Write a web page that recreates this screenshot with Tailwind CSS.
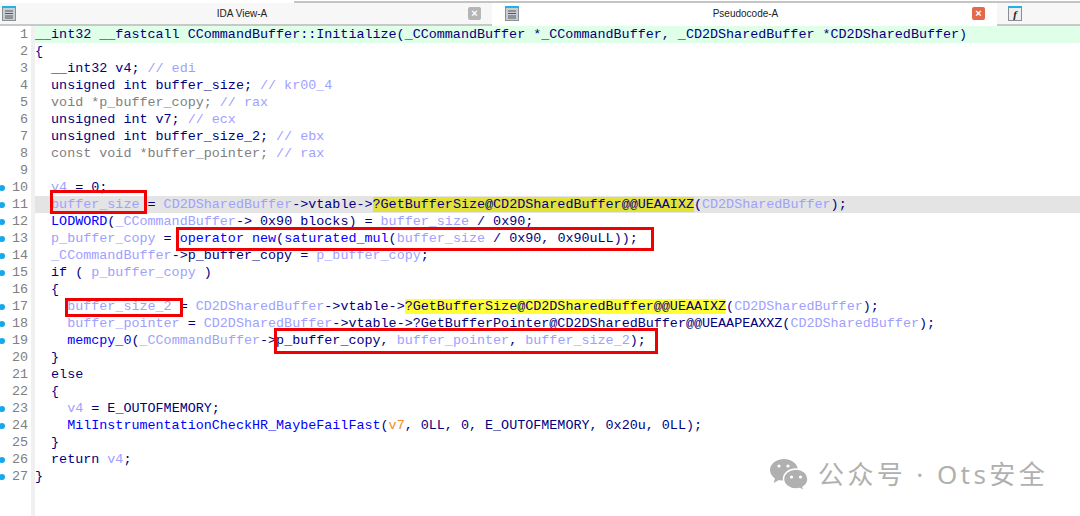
<!DOCTYPE html>
<html lang="zh">
<head>
  <meta charset="UTF-8" />
  <title>Pseudocode-A</title>
  <script src="https://cdn.jsdelivr.net/npm/@tailwindcss/browser@4"></script>
</head>
<body class="bg-white overflow-hidden">
<div class="relative w-[1080px] h-[516px] overflow-hidden bg-white flex flex-col">

  <!-- tabs -->
  <div class="h-[3px] pt-[1px] pl-[294px]"><div class="h-[2px] bg-[#c4c4c4]"></div></div>
  <header class="h-[23px] flex font-['Liberation_Sans',sans-serif] text-[10px] text-[#222]">
    <div class="w-[492px] flex items-center bg-[#f7f7f7] border-b-2 border-[#c8c8c8] pl-[2px] pr-[11px]">
      <svg width="14" height="15" viewBox="0 0 14 15"><rect x=".5" y=".5" width="13" height="14" fill="#c9ced2" stroke="#8a8f93"/><rect x="0" y="0" width="14" height="2" fill="#1fb2e6"/><path d="M3 5h8M3 7.500h8M3 10h8M3 12h8" stroke="#55595c"/></svg>
      <span class="flex-1 text-center">IDA View-A</span>
      <span class="w-[13px] h-[13px] rounded-[2px] bg-[#b5b5b5] text-white flex items-center justify-center text-[11px] font-bold leading-none">×</span>
    </div>
    <div class="w-[505px] flex items-center bg-white pl-[13px] pr-[12px] pb-[2px]">
      <svg width="14" height="15" viewBox="0 0 14 15"><rect x=".5" y=".5" width="13" height="14" fill="#c9ced2" stroke="#8a8f93"/><rect x="0" y="0" width="14" height="2" fill="#1fb2e6"/><path d="M3 5h8M3 7.500h8M3 10h8M3 12h8" stroke="#55595c"/></svg>
      <span class="flex-1 text-center">Pseudocode-A</span>
      <span class="w-[13px] h-[13px] rounded-[2px] bg-[#e2694a] text-white flex items-center justify-center text-[11px] font-bold leading-none">×</span>
    </div>
    <div class="flex-1 flex items-center bg-[#f7f7f7] border-b-2 border-[#c8c8c8] pl-[11px]">
      <span class="w-[14px] h-[15px] border border-[#8a8f93] border-t-2 border-t-[#1fb2e6] bg-[#eee] flex items-center justify-center font-['Liberation_Serif',serif] italic font-bold text-[11px] leading-none">f</span>
    </div>
  </header>

  <!-- code view -->
  <main class="flex-1 flex font-['Liberation_Mono',monospace] text-[13.4px] leading-[17px] text-[#000080]">
    <div class="w-[31px] text-[#808080]">
      <div class="flex items-center"><span class="flex-1 text-right pr-[3px]">1</span></div>
      <div class="flex items-center"><span class="flex-1 text-right pr-[3px]">2</span></div>
      <div class="flex items-center"><span class="flex-1 text-right pr-[3px]">3</span></div>
      <div class="flex items-center"><span class="flex-1 text-right pr-[3px]">4</span></div>
      <div class="flex items-center"><span class="flex-1 text-right pr-[3px]">5</span></div>
      <div class="flex items-center"><span class="flex-1 text-right pr-[3px]">6</span></div>
      <div class="flex items-center"><span class="flex-1 text-right pr-[3px]">7</span></div>
      <div class="flex items-center"><span class="flex-1 text-right pr-[3px]">8</span></div>
      <div class="flex items-center"><span class="flex-1 text-right pr-[3px]">9</span></div>
      <div class="flex items-center"><i class="w-[6px] h-[6px] -ml-[1px] rounded-full bg-[#14a9ec]"></i><span class="flex-1 text-right pr-[3px]">10</span></div>
      <div class="flex items-center"><i class="w-[6px] h-[6px] -ml-[1px] rounded-full bg-[#14a9ec]"></i><span class="flex-1 text-right pr-[3px]">11</span></div>
      <div class="flex items-center"><i class="w-[6px] h-[6px] -ml-[1px] rounded-full bg-[#14a9ec]"></i><span class="flex-1 text-right pr-[3px]">12</span></div>
      <div class="flex items-center"><i class="w-[6px] h-[6px] -ml-[1px] rounded-full bg-[#14a9ec]"></i><span class="flex-1 text-right pr-[3px]">13</span></div>
      <div class="flex items-center"><i class="w-[6px] h-[6px] -ml-[1px] rounded-full bg-[#14a9ec]"></i><span class="flex-1 text-right pr-[3px]">14</span></div>
      <div class="flex items-center"><i class="w-[6px] h-[6px] -ml-[1px] rounded-full bg-[#14a9ec]"></i><span class="flex-1 text-right pr-[3px]">15</span></div>
      <div class="flex items-center"><span class="flex-1 text-right pr-[3px]">16</span></div>
      <div class="flex items-center"><i class="w-[6px] h-[6px] -ml-[1px] rounded-full bg-[#14a9ec]"></i><span class="flex-1 text-right pr-[3px]">17</span></div>
      <div class="flex items-center"><i class="w-[6px] h-[6px] -ml-[1px] rounded-full bg-[#14a9ec]"></i><span class="flex-1 text-right pr-[3px]">18</span></div>
      <div class="flex items-center"><i class="w-[6px] h-[6px] -ml-[1px] rounded-full bg-[#14a9ec]"></i><span class="flex-1 text-right pr-[3px]">19</span></div>
      <div class="flex items-center"><span class="flex-1 text-right pr-[3px]">20</span></div>
      <div class="flex items-center"><span class="flex-1 text-right pr-[3px]">21</span></div>
      <div class="flex items-center"><span class="flex-1 text-right pr-[3px]">22</span></div>
      <div class="flex items-center"><i class="w-[6px] h-[6px] -ml-[1px] rounded-full bg-[#14a9ec]"></i><span class="flex-1 text-right pr-[3px]">23</span></div>
      <div class="flex items-center"><i class="w-[6px] h-[6px] -ml-[1px] rounded-full bg-[#14a9ec]"></i><span class="flex-1 text-right pr-[3px]">24</span></div>
      <div class="flex items-center"><span class="flex-1 text-right pr-[3px]">25</span></div>
      <div class="flex items-center"><i class="w-[6px] h-[6px] -ml-[1px] rounded-full bg-[#14a9ec]"></i><span class="flex-1 text-right pr-[3px]">26</span></div>
      <div class="flex items-center"><i class="w-[6px] h-[6px] -ml-[1px] rounded-full bg-[#14a9ec]"></i><span class="flex-1 text-right pr-[3px]">27</span></div>
    </div>
    <div class="w-[4px] bg-[#f0f0f0]"></div>
    <div class="flex-1 [&>div]:whitespace-pre">
      <div class="bg-[#e0ffe9]">__int32 __fastcall CCommandBuffer::Initialize(_CCommandBuffer *_CCommandBuffer, _CD2DSharedBuffer *CD2DSharedBuffer)</div>
      <div>{</div>
      <div>  __int32 v4; <span class="text-[#a0a0ff]">// edi</span></div>
      <div>  unsigned int buffer_size; <span class="text-[#a0a0ff]">// kr00_4</span></div>
      <div class="text-[#808080]">  void *p_buffer_copy; <span class="text-[#a0a0ff]">// rax</span></div>
      <div>  unsigned int v7; <span class="text-[#a0a0ff]">// ecx</span></div>
      <div>  unsigned int buffer_size_2; <span class="text-[#a0a0ff]">// ebx</span></div>
      <div class="text-[#808080]">  const void *buffer_pointer; <span class="text-[#a0a0ff]">// rax</span></div>
      <div> </div>
      <div>  <span class="text-[#a0a0ff]">v4</span> = 0;</div>
      <div class="bg-[#e4e4e4]">  <span class="text-[#a0a0ff]">buffer_size</span> = <span class="text-[#a0a0ff]">CD2DSharedBuffer</span>-&gt;vtable-&gt;<span class="bg-[#e2e23a]">?GetBufferSize@CD2DSharedBuffer@@UEAAIXZ</span>(<span class="text-[#a0a0ff]">CD2DSharedBuffer</span>);</div>
      <div>  <span class="text-[#0000ff]">LODWORD</span>(<span class="text-[#a0a0ff]">_CCommandBuffer</span>-&gt; 0x90 blocks) = <span class="text-[#a0a0ff]">buffer_size</span> / 0x90;</div>
      <div>  <span class="text-[#a0a0ff]">p_buffer_copy</span> = <span class="text-[#0000ff]">operator new</span>(<span class="text-[#0000ff]">saturated_mul</span>(<span class="text-[#a0a0ff]">buffer_size</span> / 0x90, 0x90uLL));</div>
      <div>  <span class="text-[#a0a0ff]">_CCommandBuffer</span>-&gt;p_buffer_copy = <span class="text-[#a0a0ff]">p_buffer_copy</span>;</div>
      <div>  if ( <span class="text-[#a0a0ff]">p_buffer_copy</span> )</div>
      <div>  {</div>
      <div>    <span class="text-[#a0a0ff]">buffer_size_2</span> = <span class="text-[#a0a0ff]">CD2DSharedBuffer</span>-&gt;vtable-&gt;<span class="bg-[#ffff33]">?GetBufferSize@CD2DSharedBuffer@@UEAAIXZ</span>(<span class="text-[#a0a0ff]">CD2DSharedBuffer</span>);</div>
      <div>    <span class="text-[#a0a0ff]">buffer_pointer</span> = <span class="text-[#a0a0ff]">CD2DSharedBuffer</span>-&gt;vtable-&gt;?GetBufferPointer@CD2DSharedBuffer@@UEAAPEAXXZ(<span class="text-[#a0a0ff]">CD2DSharedBuffer</span>);</div>
      <div>    <span class="text-[#0000ff]">memcpy_0</span>(<span class="text-[#a0a0ff]">_CCommandBuffer</span>-&gt;p_buffer_copy, <span class="text-[#a0a0ff]">buffer_pointer</span>, <span class="text-[#a0a0ff]">buffer_size_2</span>);</div>
      <div>  }</div>
      <div>  else</div>
      <div>  {</div>
      <div>    <span class="text-[#a0a0ff]">v4</span> = E_OUTOFMEMORY;</div>
      <div>    <span class="text-[#0000ff]">MilInstrumentationCheckHR_MaybeFailFast</span>(<span class="text-[#f08a24]">v7</span>, 0LL, 0, E_OUTOFMEMORY, 0x20u, 0LL);</div>
      <div>  }</div>
      <div>  return <span class="text-[#a0a0ff]">v4</span>;</div>
      <div>}</div>
    </div>
  </main>

  <!-- red annotation boxes -->
  <div class="absolute left-[50px] top-[190px] w-[97px] h-[24px] border-[3px] border-[#f00000]"></div>
  <div class="absolute left-[176px] top-[227px] w-[478px] h-[24px] border-[3px] border-[#f00000]"></div>
  <div class="absolute left-[65px] top-[298px] w-[118px] h-[19px] border-[3px] border-[#f00000]"></div>
  <div class="absolute left-[274px] top-[328px] w-[384px] h-[26px] border-[3px] border-[#f00000]"></div>

  <!-- watermark -->
  <div class="absolute left-[769px] top-[456px] flex items-center gap-[8px] text-[#b0b0b0] text-[26px] tracking-[3.4px] leading-[36px] font-['Noto_Sans','Noto_Sans_CJK_SC',sans-serif]">
    <svg width="41" height="33" viewBox="0 0 41 33">
      <path d="M15 1C7 1 1 6 1 12c0 3.500 2 6.500 5 8.500L4.500 25l5.500-3c1.500.4 3 .6 5 .6 8 0 14-5 14-10.600S23 1 15 1z" fill="#b0b0b0" />
      <path d="M27 11c-7 0-12.500 4.500-12.500 10S20 31 27 31c1.300 0 2.600-.2 3.800-.5l4.400 2.400-1.200-3.800c3-1.800 5-4.600 5-8.100C39 15.500 34 11 27 11z" fill="#b0b0b0" stroke="#fff" stroke-width="1.500"/>
      <circle cx="10" cy="8" r="1.600" fill="#fff"/><circle cx="19" cy="8" r="1.600" fill="#fff"/>
      <circle cx="22.500" cy="19" r="1.600" fill="#fff"/><circle cx="31.500" cy="19" r="1.600" fill="#fff"/>
    </svg>
    <span>公众号 · Ots安全</span>
  </div>
</div>
</body>
</html>
